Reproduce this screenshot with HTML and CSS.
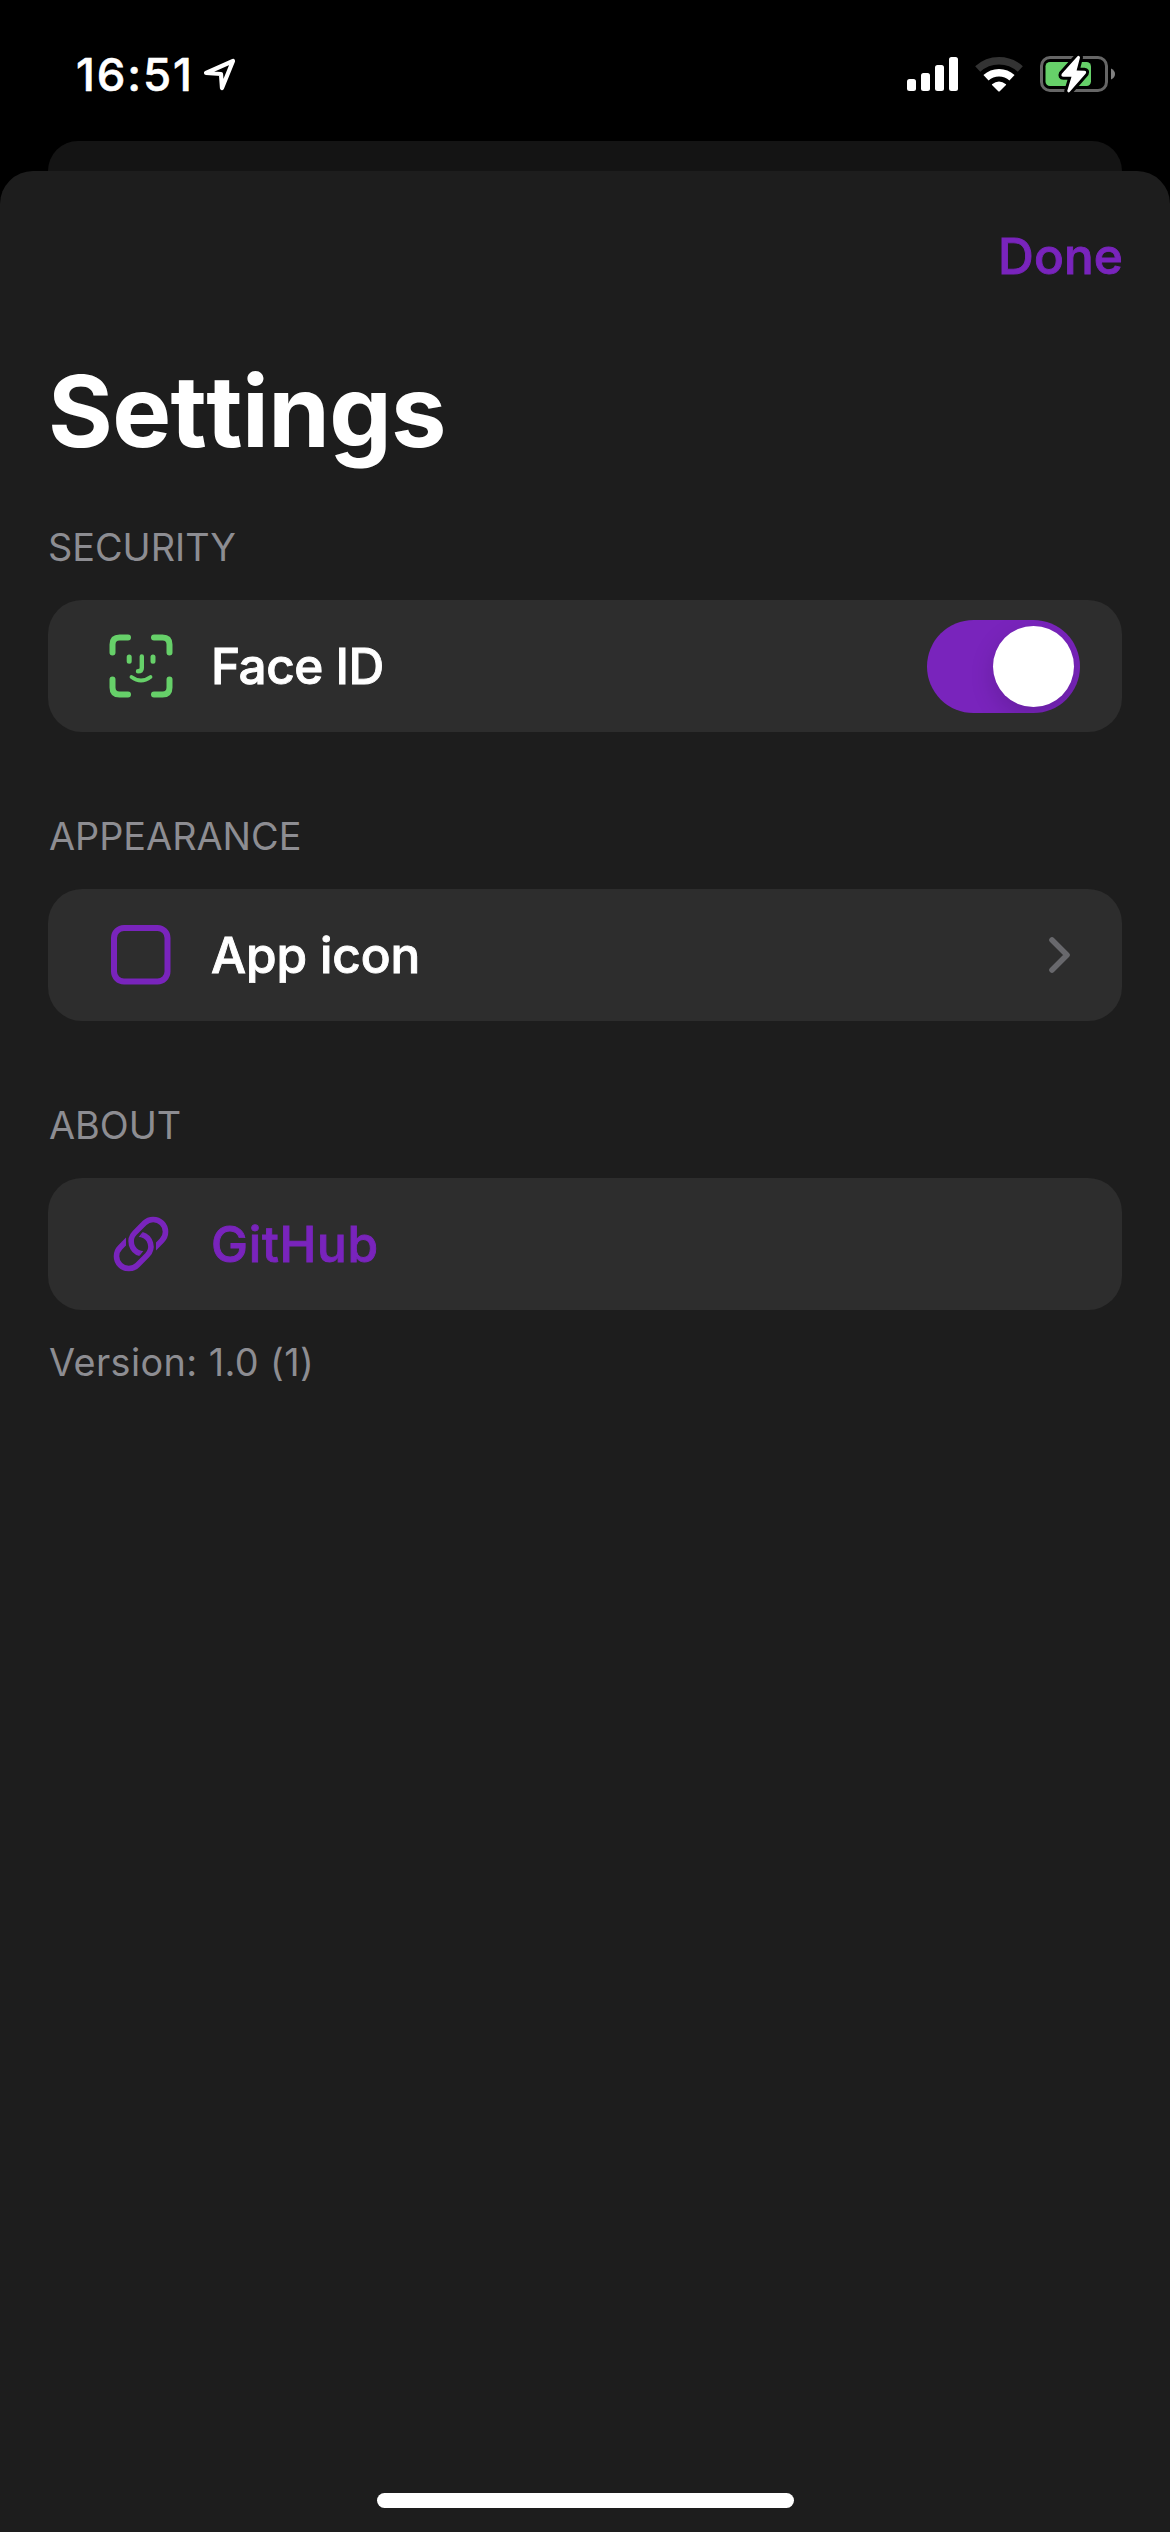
FILE: index.html
```html
<!DOCTYPE html>
<html lang="en">
<head>
<meta charset="utf-8">
<title>Settings</title>
<link rel="stylesheet" href="styles.css">
</head>
<body>
<header class="status">
  <div class="status-left">
    <span class="time">16:51</span>
    <svg class="location" width="34" height="36" viewBox="0 0 34 36"><path d="M4 16 31 4 20 31 19 17Z" fill="none" stroke="#fff" stroke-width="4.2" stroke-linejoin="round"/></svg>
  </div>
  <div class="status-right">
    <svg width="51" height="34" viewBox="0 0 51 34" fill="#fff"><rect y="22" width="9" height="12" rx="2.5"/><rect x="14" y="16" width="9" height="18" rx="2.5"/><rect x="28" y="8" width="9" height="26" rx="2.5"/><rect x="42" width="9" height="34" rx="2.5"/></svg>
    <svg class="wifi" width="48" height="36" viewBox="0 0 48 36"><path d="M2.7 13A31.5 31.5 0 0 1 45.3 13" fill="none" stroke="#333" stroke-width="7.5"/><path d="M11 21.8A19 19 0 0 1 37 21.8" fill="none" stroke="#fff" stroke-width="7.5"/><path d="M17 28.3Q24 22.5 31 28.3Q31.3 28.7 31 29L25 35Q24 36 23 35L17 29Q16.7 28.7 17 28.3Z" fill="#fff"/></svg>
    <svg class="battery" width="76" height="40" viewBox="0 0 76 40"><rect x="1.5" y="3.5" width="65" height="33" rx="8.5" fill="none" stroke="#666" stroke-width="3"/><rect x="5.5" y="8" width="45.5" height="24" rx="4.5" fill="#66d069"/><path d="M71 14.5Q75 16.5 75 20T71 25.5Z" fill="#808080"/><path d="M37.5 2.3 21.8 19.8Q20.5 22.6 23.5 22.8L31.5 22.8 27.2 37Q28.2 39.5 29.8 37.8L45.8 19.5Q47 17 44.3 16.8L36.6 16.5 40 3.4Q39.3 .8 37.5 2.3Z" fill="#fff" stroke="#000" stroke-width="6" stroke-linejoin="round" paint-order="stroke"/></svg>
  </div>
</header>
<div class="back-sheet"></div>
<main class="sheet">
  <nav class="nav"><a class="done">Done</a></nav>
  <h1 class="title">Settings</h1>
  <section class="group">
    <h2 class="label security">SECURITY</h2>
    <div class="row">
      <svg class="icon" width="64" height="64" viewBox="0 0 64 64" fill="none" stroke="#66d069" stroke-width="6" stroke-linecap="round" stroke-linejoin="round"><path d="M3.5 18.5V10.5Q3.5 3.5 10.5 3.5H19M45 3.5H53.5Q60.5 3.5 60.5 10.5V18.5M60.5 45.5V53.5Q60.5 60.5 53.5 60.5H45M19 60.5H10.5Q3.5 60.5 3.5 53.5V45.5"/><path d="M20.2 23V27.3M44 23V27.3" stroke-width="5"/><path d="M32.8 22.5V34Q32.8 37.3 29 37.3" stroke-width="4.4"/><path d="M22.5 43Q32 50 41.5 43" stroke-width="3.8"/></svg>
      <span class="name face">Face ID</span>
      <span class="toggle"><span class="knob"></span></span>
    </div>
  </section>
  <section class="group">
    <h2 class="label">APPEARANCE</h2>
    <div class="row">
      <svg class="icon" width="64" height="64" viewBox="0 0 64 64"><rect x="5" y="5" width="53.5" height="53.5" rx="10" fill="none" stroke="#7924bc" stroke-width="6"/></svg>
      <span class="name app">App icon</span>
      <svg class="chevron" width="22" height="36" viewBox="0 0 22 36"><path d="M3 3 18 18 3 33" fill="none" stroke="#68686c" stroke-width="5.6" stroke-linecap="round" stroke-linejoin="round"/></svg>
    </div>
  </section>
  <section class="group">
    <h2 class="label">ABOUT</h2>
    <div class="row">
      <svg class="icon" width="64" height="64" viewBox="0 0 64 64">
        <g fill="none" stroke="#7924bc" stroke-width="5.6">
          <path d="M31.2 41.4A12.3 12.3 0 0 1 25.7 20.9L35.5 11.1A12.3 12.3 0 0 1 52.9 28.5L49 32.4"/>
          <path d="M32.8 22.6A12.3 12.3 0 0 1 38.3 43.1L28.5 52.9A12.3 12.3 0 0 1 11.1 35.5L15 31.6"/>
        </g>
        <path fill="#7924bc" d="M51.2 34.2 47 38.4V30.2L49 30.4ZM12.8 29.8 17 25.6V33.8L15 33.6ZM31.5 38.7 34.3 39 30.6 43.8ZM32.5 25.3 29.7 25 33.4 20.2Z"/>
      </svg>
      <span class="name github">GitHub</span>
    </div>
    <p class="version">Version: 1.0 (1)</p>
  </section>
  <div class="home"></div>
</main>
</body>
</html>
```
FILE: styles.css
```css
* { box-sizing: border-box; }
body {
  margin: 0;
  width: 1170px;
  height: 2532px;
  overflow: hidden;
  display: flex;
  flex-direction: column;
  background: #000;
  color: #fff;
  font-family: Inter, "Liberation Sans", sans-serif;
}
svg { display: block; flex: none; overflow: visible; }
.status {
  height: 141px;
  padding: 44px 54px 0 76px;
  display: flex;
  justify-content: space-between;
  align-items: flex-start;
}
.status-left { display: flex; height: 61px; align-items: center; }
.time { width: 126px; font-size: 45.5px; font-weight: 500; line-height: 61px; letter-spacing: 1.9px; white-space: nowrap; -webkit-text-stroke: .6px currentColor; }
.status-right { display: flex; height: 60px; align-items: center; }
.wifi { margin-left: 17px; }
.battery { margin-left: 17px; }
.back-sheet { height: 30px; margin: 0 48px; border-radius: 30px 30px 0 0; background: #141414; }
.sheet {
  flex: 1;
  display: flex;
  flex-direction: column;
  padding: 0 48px 24px;
  border-radius: 33px 33px 0 0;
  background: #1d1d1d;
}
.nav { height: 170px; display: flex; justify-content: flex-end; align-items: center; }
.done { margin-right: -1px; color: #7924bc; font-size: 49.5px; font-weight: 500; line-height: 60px; letter-spacing: .1px; -webkit-text-stroke: .9px currentColor; }
.title { margin: 9px 0 0; font-size: 99px; font-weight: 700; line-height: 122px; font-kerning: none; font-variant-ligatures: none; letter-spacing: -.6px; }
.label { margin: 0 0 28px; padding-left: 1px; color: #8d8d92; font-size: 37.8px; font-weight: 400; line-height: 50px; }
.security { padding-left: 0; }
.group { margin-top: 50px; }
.group + .group { margin-top: 79px; }
.row {
  height: 132px;
  padding: 0 42px 0 61px;
  display: flex;
  align-items: center;
  border-radius: 34px;
  background: #2d2d2d;
}
.name { margin-left: 38px; flex: 1; font-size: 49.5px; font-weight: 500; line-height: 60px; white-space: nowrap; -webkit-text-stroke: .9px currentColor; }
.face { letter-spacing: -.5px; }
.app { letter-spacing: -.15px; }
.github { color: #7924bc; letter-spacing: .7px; }
.toggle { width: 153px; height: 93px; padding: 6px; display: flex; justify-content: flex-end; border-radius: 47px; overflow: hidden; background: #7924bc; }
.knob { width: 81px; height: 81px; border-radius: 50%; background: #fff; box-shadow: 0 9px 24px rgba(0, 0, 0, .15); }
.chevron { margin-right: 9px; }
.version { margin: 27px 0 0; padding-left: 1px; color: #8d8d92; font-size: 37.8px; line-height: 50px; letter-spacing: .4px; }
.home { width: 417px; height: 15px; margin: auto auto 0; border-radius: 8px; background: #fff; }
```
